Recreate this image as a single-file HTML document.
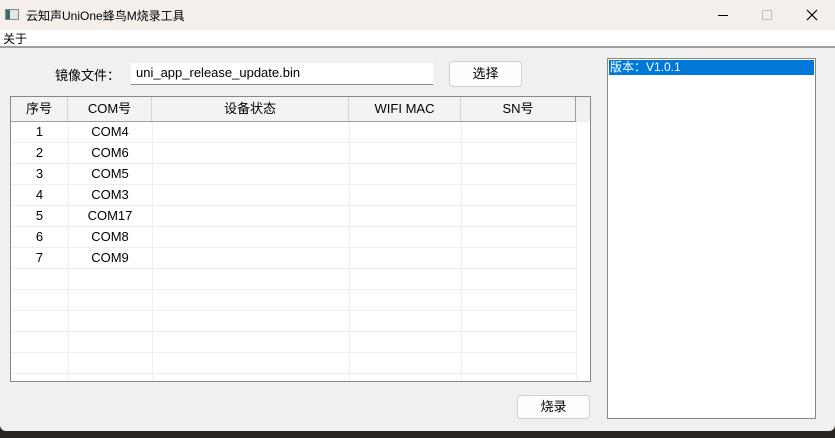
<!DOCTYPE html>
<html><head><meta charset="utf-8"><style>
*{margin:0;padding:0;box-sizing:border-box}
body{width:835px;height:438px;overflow:hidden;background:#2a2420;font-family:"Liberation Sans","Noto Sans CJK SC",sans-serif;font-size:13px;color:#000;position:relative}
.a{position:absolute}
.win{left:0;top:0;width:835px;height:431px;background:#f0f0f0;border-radius:0 0 6px 6px;overflow:hidden}
.title{left:0;top:0;width:835px;height:30px;background:#f5efec}
.menu{left:0;top:30px;width:835px;height:16px;background:#fff}
.sep{left:0;top:46px;width:835px;height:2px;background:#a0a0a0}
.btn{background:#fdfdfd;border:1px solid #d0d0d0;border-radius:4px;text-align:center}
.tbl{left:10px;top:96px;width:581px;height:286px;border:1px solid #828790;background:#fff;overflow:hidden}
.hd{left:0;top:0;width:579px;height:25px;background:#f0f0f0}
.hc{top:0;height:24px;line-height:24px;text-align:center;border-right:1px solid #d4d4d4;background:#f3f3f3}
.hl{left:0;top:24px;width:565px;height:1px;background:#a0a0a0}
.vl{top:25px;width:1px;height:260px;background:#efefef}
.hr{left:0;width:565px;height:1px;background:#efefef}
.c{height:21px;line-height:21px;text-align:center}
</style></head><body>
<div class="a win">
<div class="a title">
 <div class="a" style="left:5px;top:9px;width:14px;height:11px;border:1px solid #8a8a8a;background:linear-gradient(90deg,#3a6a6a 0 4px,#dfe8e8 4px)"></div>
 <div class="a" style="left:26px;top:7px;font-size:12px">云知声UniOne蜂鸟M烧录工具</div>
 <div class="a" style="left:718px;top:15px;width:10px;height:1px;background:#000"></div>
 <div class="a" style="left:762px;top:10px;width:10px;height:10px;border:1px solid #c0c0c0"></div>
 <svg class="a" style="left:806px;top:9px" width="12" height="12"><path d="M1 1L11 11M11 1L1 11" stroke="#000" stroke-width="1.2"/></svg>
</div>
<div class="a menu"><span class="a" style="left:3px;top:0;font-size:12px">关于</span></div>
<div class="a sep"></div>
<div class="a" style="left:55px;top:65px">镜像文件：</div>
<div class="a" style="left:131px;top:63px;width:302px;height:22px;background:#fff;border-bottom:1px solid #888;padding-left:5px;line-height:20px">uni_app_release_update.bin</div>
<div class="a btn" style="left:449px;top:61px;width:73px;height:26px;line-height:24px">选择</div>
<div class="a tbl">
 <div class="a hd"></div>
 <div class="a hc" style="left:0;width:57px">序号</div>
 <div class="a hc" style="left:57px;width:84px">COM号</div>
 <div class="a hc" style="left:141px;width:197px">设备状态</div>
 <div class="a hc" style="left:338px;width:112px">WIFI MAC</div>
 <div class="a hc" style="left:450px;width:115px;border-right:1px solid #a0a0a0">SN号</div>
 <div class="a hl"></div>
 <div class="a vl" style="left:57px"></div><div class="a vl" style="left:141px"></div><div class="a vl" style="left:338px"></div><div class="a vl" style="left:450px"></div><div class="a vl" style="left:565px"></div>
 <div class="a hr" style="top:45px"></div><div class="a hr" style="top:66px"></div><div class="a hr" style="top:87px"></div><div class="a hr" style="top:108px"></div><div class="a hr" style="top:129px"></div><div class="a hr" style="top:150px"></div><div class="a hr" style="top:171px"></div><div class="a hr" style="top:192px"></div><div class="a hr" style="top:213px"></div><div class="a hr" style="top:234px"></div><div class="a hr" style="top:255px"></div><div class="a hr" style="top:276px"></div>
 <div class="a" style="left:0;top:24px;width:57px">
  <div class="c">1</div><div class="c">2</div><div class="c">3</div><div class="c">4</div><div class="c">5</div><div class="c">6</div><div class="c">7</div></div>
 <div class="a" style="left:57px;top:24px;width:84px">
  <div class="c">COM4</div><div class="c">COM6</div><div class="c">COM5</div><div class="c">COM3</div><div class="c">COM17</div><div class="c">COM8</div><div class="c">COM9</div></div>
</div>
<div class="a btn" style="left:517px;top:395px;width:73px;height:24px;line-height:22px">烧录</div>
<div class="a" style="left:607px;top:58px;width:209px;height:361px;background:#fff;border:1px solid #828790">
 <div class="a" style="left:1px;top:1px;width:205px;height:15px;background:#0078d7;color:#fff;font-family:'Liberation Sans','Noto Sans CJK SC',sans-serif;font-size:12px;line-height:15px;padding-left:1px">版本：V1.0.1</div>
</div>
</div>
</body></html>
